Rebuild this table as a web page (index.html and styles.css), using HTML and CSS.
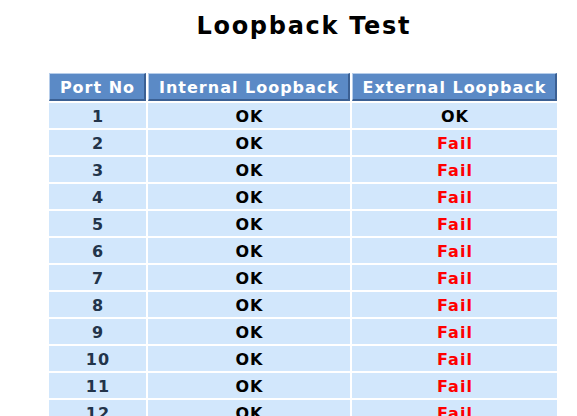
FILE: index.html
```html
<!DOCTYPE html>
<html>
<head>
<meta charset="utf-8">
<link rel="stylesheet" href="styles.css">
</head>
<body>
<div class="page">
  <div class="title">Loopback Test</div>
  <table class="grid">
    <thead>
      <tr><th class="c1">Port No</th><th class="c2">Internal Loopback</th><th class="c3">External Loopback</th></tr>
    </thead>
    <tbody>
      <tr><td class="num">1</td><td>OK</td><td>OK</td></tr>
      <tr><td class="num">2</td><td>OK</td><td class="fail">Fail</td></tr>
      <tr><td class="num">3</td><td>OK</td><td class="fail">Fail</td></tr>
      <tr><td class="num">4</td><td>OK</td><td class="fail">Fail</td></tr>
      <tr><td class="num">5</td><td>OK</td><td class="fail">Fail</td></tr>
      <tr><td class="num">6</td><td>OK</td><td class="fail">Fail</td></tr>
      <tr><td class="num">7</td><td>OK</td><td class="fail">Fail</td></tr>
      <tr><td class="num">8</td><td>OK</td><td class="fail">Fail</td></tr>
      <tr><td class="num">9</td><td>OK</td><td class="fail">Fail</td></tr>
      <tr><td class="num">10</td><td>OK</td><td class="fail">Fail</td></tr>
      <tr><td class="num">11</td><td>OK</td><td class="fail">Fail</td></tr>
      <tr><td class="num">12</td><td>OK</td><td class="fail">Fail</td></tr>
      <tr><td class="num">13</td><td>OK</td><td class="fail">Fail</td></tr>
    </tbody>
  </table>
</div>
</body>
</html>
```
FILE: styles.css
```css
html, body {
  margin: 0;
  padding: 0;
  background: #ffffff;
  font-family: "DejaVu Sans", Verdana, sans-serif;
}
.page {
  width: 512px;
  margin-left: 47px;
  padding-top: 11px;
}
.title {
  text-align: center;
  font-size: 24px;
  font-weight: bold;
  letter-spacing: 1.7px;
  text-indent: 1.7px;
  line-height: 30px;
  color: #000;
  margin-bottom: 30px;
}
.grid {
  border-collapse: separate;
  border-spacing: 2px;
  width: 512px;
  margin: 0;
}
.grid th {
  background: #5b8ac6;
  color: #ffffff;
  font-size: 16px;
  font-weight: bold;
  letter-spacing: 1px;
  text-indent: 1px;
  padding: 3px 0 0 0;
  line-height: 22px;
  border-top: 1px solid #b6cdea;
  border-left: 1px solid #b6cdea;
  border-right: 2px solid #3b6093;
  border-bottom: 2px solid #3b6093;
  box-sizing: border-box;
  height: 28px;
  text-align: center;
  vertical-align: middle;
  white-space: nowrap;
}
.grid th.c1 { width: 97px; }
.grid th.c2 { width: 202px; }
.grid th.c3 { width: 205px; }
.grid td {
  background: #d2e7fc;
  height: 23px;
  padding: 2px 0 0 0;
  font-size: 16px;
  font-weight: bold;
  letter-spacing: 1px;
  text-indent: 1px;
  text-align: center;
  color: #000;
  line-height: 23px;
}
.grid td.num { color: #22344a; }
.grid td.fail { color: #ff0000; }
```
